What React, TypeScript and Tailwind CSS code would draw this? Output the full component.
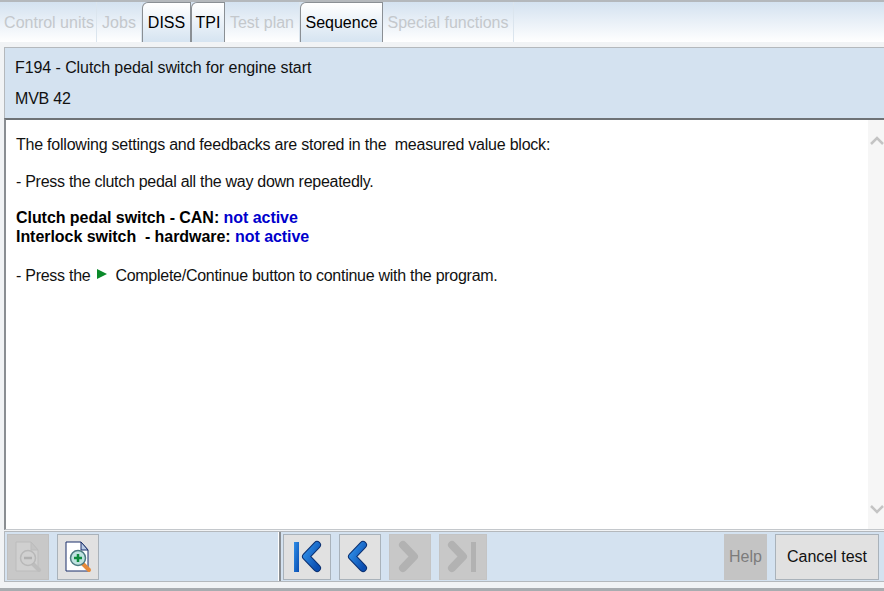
const font = { fontFamily: '"Liberation Sans", Arial, sans-serif' };

function Tab({ label, active, w }: { label: string; active?: boolean; w: string }) {
  if (active) {
    return (
      <div className={`${w} h-[40px] pt-[1px] flex items-center justify-center border border-b-0 border-[#8a8f94] rounded-tl-[6px] bg-gradient-to-b from-white to-[#d6e4f1] text-black text-[16px]`}>
        {label}
      </div>
    );
  }
  return (
    <div className={`${w} h-[40px] pt-[1px] flex items-center justify-center border-r border-[#dbe5ee] text-[#c4c8cc] text-[16px]`}>
      {label}
    </div>
  );
}

function Zoom({ plus }: { plus?: boolean }) {
  return (
    <div className={`w-[42px] h-[46px] border ${plus ? "bg-[#e1e1e1] border-[#a9b2ba]" : "bg-[#c8c8c8] border-[#c0c0c0]"}`}>
      <svg width="40" height="44" viewBox="0 0 40 44">
        <path d="M8 7h15l7 8v21H8z" fill={plus ? "#fff" : "#d0d0d0"} stroke={plus ? "#1a2f6a" : "#bcbcbc"} strokeWidth="1" />
        <path d="M23 7v8h7z" fill={plus ? "#b8cbe6" : "#c4c4c4"} stroke={plus ? "#1a2f6a" : "#bcbcbc"} />
        <path d="M25 29l6 6" stroke={plus ? "#e58a3a" : "#bdbdbd"} strokeWidth="4" strokeLinecap="round" />
        <circle cx="20" cy="23" r="7.5" fill={plus ? "#bfe3e0" : "#d0d0d0"} stroke={plus ? "#4c7a80" : "#b8b8b8"} strokeWidth="1.5" />
        <path d={plus ? "M16 23h8M20 19v8" : "M16 23h8"} stroke={plus ? "#0c8a3c" : "#b0b0b0"} strokeWidth="2.5" />
      </svg>
    </div>
  );
}

// pts are in button coordinates, chevron is one thick stroke with a lighter core
function Nav({ pts, barX, on, w, id }: { pts: string; barX?: number; on?: boolean; w: number; id: string }) {
  return (
    <div style={{ width: w }} className={`h-[46px] border ${on ? "bg-[#e1e1e1] border-[#a9b2ba]" : "bg-[#c8c8c8] border-[#c4c4c4]"}`}>
      <svg width={w - 2} height="44" viewBox={`0 0 ${w - 2} 44`}>
        <defs>
          <linearGradient id={id} x1="0" y1="0" x2="1" y2="1">
            <stop offset="0" stopColor="#2f8fe8" />
            <stop offset="1" stopColor="#0a4db0" />
          </linearGradient>
        </defs>
        {barX !== undefined && (
          <rect x={barX} y="7" width="5" height="30" fill={on ? `url(#${id})` : "#b2b2b2"} />
        )}
        {on && <polyline points={pts} fill="none" stroke="#0a2f70" strokeWidth="8" strokeLinejoin="round" strokeLinecap="round" />}
        <polyline points={pts} fill="none" stroke={on ? `url(#${id})` : "#b2b2b2"} strokeWidth={on ? 6 : 8} strokeLinejoin="round" strokeLinecap="round" />
      </svg>
    </div>
  );
}

export default function App() {
  return (
    <div style={font} className="w-[884px] h-[591px] overflow-hidden flex flex-col bg-[#f1f3f5]">
      {/* tabs */}
      <div className="h-[42px] shrink-0 border-t-2 border-[#b4b8bc] bg-gradient-to-b from-[#d4e2f0] to-white flex">
        <Tab label="Control units" w="w-[97px] pl-[2px]" />
        <Tab label="Jobs" w="w-[45px]" />
        <Tab label="DISS" active w="w-[49px]" />
        <Tab label="TPI" active w="w-[34px]" />
        <Tab label="Test plan" w="w-[75px]" />
        <Tab label="Sequence" active w="w-[83px]" />
        <Tab label="Special functions" w="w-[131px]" />
      </div>

      <div className="pt-[5px] pl-[4px] flex flex-col">
        {/* header */}
        <div className="h-[71px] shrink-0 bg-[#d4e2f0] border-t border-l border-[#b4b8bc] pl-[10px] pt-[11px] text-[16px] leading-[18px] text-[#111]">
          <div className="tracking-[-0.08px]">F194 - Clutch pedal switch for engine start</div>
          <div className="mt-[13px] tracking-[-0.2px]">MVB 42</div>
        </div>

        {/* body */}
        <div className="h-[412px] shrink-0 flex bg-white border-t-2 border-l-2 border-t-[#6e7276] border-l-[#8a8e92] border-b border-b-[#c4c8cc]">
          <div className="flex-1 pl-[10px] pt-[16px] text-[16px] leading-[18px] text-[#111]">
            <p className="tracking-[-0.225px]">The following settings and feedbacks are stored in the&nbsp; measured value block:</p>
            <p className="mt-[19px] tracking-[-0.28px]">- Press the clutch pedal all the way down repeatedly.</p>
            <p className="mt-[18px] font-bold text-black tracking-[-0.05px]">Clutch pedal switch - CAN: <span className="text-[#0000cc]">not active</span></p>
            <p className="mt-[1px] font-bold text-black tracking-[-0.05px]">Interlock switch&nbsp; - hardware: <span className="text-[#0000cc]">not active</span></p>
            <p className="mt-[21px] flex items-center tracking-[-0.27px]">
              - Press the
              <svg width="12" height="12" viewBox="0 0 12 12" className="ml-[6px] mr-[7px] -mt-[4px]"><path d="M1 1l10 5-10 5z" fill="#0a8a2a" /></svg>
              Complete/Continue button to continue with the program.
            </p>
          </div>
          <div className="w-[16px] bg-[#f6f6f6] flex flex-col justify-between items-end pt-[16px] pb-[15px]">
            <svg width="14" height="9" viewBox="0 0 14 9"><path d="M1 8l6-6 6 6" fill="none" stroke="#c4c4c4" strokeWidth="2.5" /></svg>
            <svg width="14" height="9" viewBox="0 0 14 9"><path d="M1 1l6 6 6-6" fill="none" stroke="#c4c4c4" strokeWidth="2.5" /></svg>
          </div>
        </div>

        {/* toolbar */}
        <div className="h-[51px] shrink-0 mt-[1px] flex items-center bg-[#d4e2f0] border-t border-l border-b border-[#b4b8bc] pl-[2px]">
          <div className="w-[271px] flex gap-[8px]"><Zoom /><Zoom plus /></div>
          <div className="self-stretch w-[3px] border-l border-r-2 border-l-white border-r-[#8a8e92]" />
          <div className="flex pl-[2px] gap-[8px]">
            <Nav id="nav1" pts="33,10 22,21.5 33,33" barX={10} on w={48} />
            <Nav id="nav2" pts="23,10 12,21.5 23,33" on w={42} />
            <Nav id="nav3" pts="13,10 24,21.5 13,33" w={42} />
            <Nav id="nav4" pts="12,10 23,21.5 12,33" barX={31} w={48} />
          </div>
          <div className="ml-auto flex gap-[8px] pr-[5px] text-[16px]">
            <div className="w-[43px] h-[46px] flex items-center justify-center bg-[#c4c4c4] text-[#7c7c7c]">Help</div>
            <div className="w-[104px] h-[46px] flex items-center justify-center bg-[#e1e1e1] border border-[#a9b2ba] text-[#111]">Cancel test</div>
          </div>
        </div>
      </div>
      <div className="h-[4px] mt-[6px] shrink-0 bg-[#a8acb0]" />
    </div>
  );
}
